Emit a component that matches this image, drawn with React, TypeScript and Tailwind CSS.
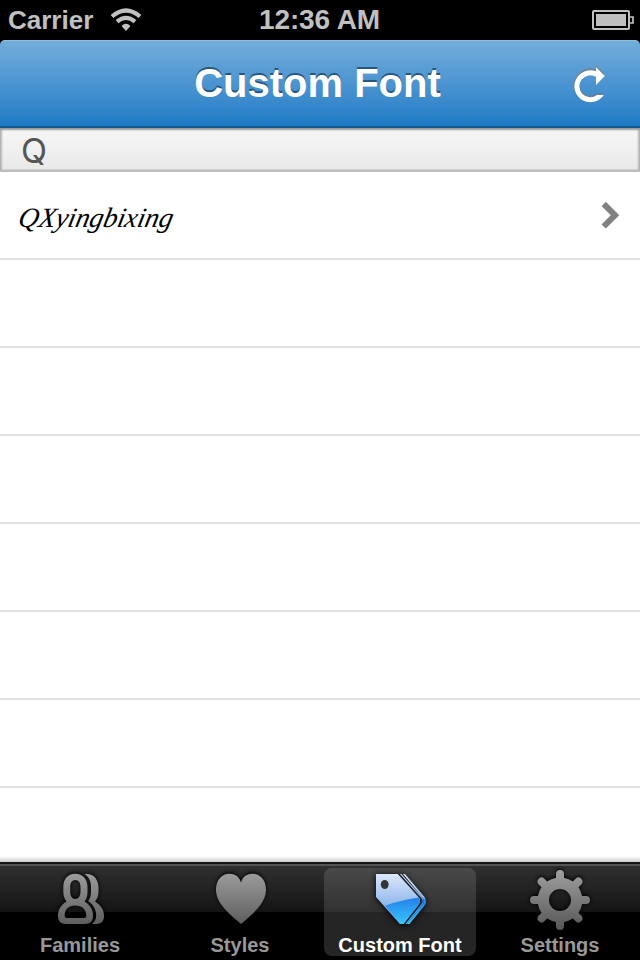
import type { ReactNode } from 'react';

function StatusBar() {
  return (
    <div className="grid h-10 shrink-0 grid-cols-3 items-center bg-black font-bold text-[#c0c0c0]">
      <div className="flex items-center pl-2">
        <span className="text-[26px] leading-10">Carrier</span>
        <svg className="ml-[17px] h-6 w-8" viewBox="110 8 32 24" fill="none" stroke="#c0c0c0" strokeWidth="4.2">
          <path d="M112 16.500Q126 4.500 140 16.500" />
          <path d="M117 21.700Q126 14 135 21.700" />
          <path d="M121.500 26Q126 21.500 130.500 26L126 31Z" fill="#c0c0c0" stroke="none" />
        </svg>
      </div>
      <span className="pr-px text-center text-[28px] leading-10 whitespace-nowrap -tracking-[0.1px]">12:36 AM</span>
      <svg className="mr-[6px] h-5 w-[42px] justify-self-end" viewBox="592 9 42 20">
        <rect x="593" y="10" width="36" height="18" rx="1" fill="none" stroke="#c0c0c0" strokeWidth="2" />
        <rect x="596" y="13" width="30" height="12" fill="#c0c0c0" />
        <path d="M630 16h3v6h-3" fill="none" stroke="#c0c0c0" strokeWidth="1.7" />
      </svg>
    </div>
  );
}

function NavBar() {
  return (
    <div className="shrink-0 bg-black">
      <header className="grid h-[88px] grid-cols-[110px_1fr_110px] items-center rounded-t-[5px] border-t border-b-2 border-t-[#92c1df] border-b-[#155b91] bg-linear-to-b from-[#72addb] to-[#1b7bc5]">
        <span />
        <h1 className="pr-[5px] text-center text-[40px] leading-[83px] font-bold whitespace-nowrap text-white [text-shadow:0_-2px_0_#28577d]">
          Custom Font
        </h1>
        <svg className="ml-[38px] h-[42px] w-[42px]" viewBox="568 63 42 42">
          <path id="reload" d="M596 65.500 604.800 74.500 596 83.500V75.200A11 11 0 1 0 597 93.500H604A16.200 16.200 0 1 1 596 69.700Z" fill="#6f7f8d" />
          <path d="M596 67 604.800 76 596 85V76.800A11 11 0 1 0 597 95H603.800A16 16 0 1 1 596 71.200Z" fill="white" />
        </svg>
      </header>
    </div>
  );
}

function TableRow({ children }: { children?: ReactNode }) {
  return (
    <div className="flex h-[88px] shrink-0 items-center justify-between border-b-2 border-[#e0e0e0] pr-5 pl-[19px]">
      {children}
    </div>
  );
}

function Gradients() {
  return (
    <defs>
      <linearGradient id="metal" x1="0" y1="870" x2="0" y2="930" gradientUnits="userSpaceOnUse">
        <stop stopColor="#a0a0a0" />
        <stop offset="1" stopColor="#565656" />
      </linearGradient>
      <linearGradient id="pale" x1="0" y1="874" x2="0" y2="908" gradientUnits="userSpaceOnUse">
        <stop stopColor="#dce7fa" />
        <stop offset="1" stopColor="#89b3eb" />
      </linearGradient>
      <linearGradient id="vivid" x1="0" y1="897" x2="0" y2="924" gradientUnits="userSpaceOnUse">
        <stop stopColor="#247fe9" />
        <stop offset="1" stopColor="#39c5ff" />
      </linearGradient>
      <linearGradient id="rear" x1="0" y1="874" x2="0" y2="924" gradientUnits="userSpaceOnUse">
        <stop stopColor="#dce7fa" />
        <stop offset=".46" stopColor="#9abfef" />
        <stop offset=".52" stopColor="#2888ed" />
        <stop offset="1" stopColor="#39c5ff" />
      </linearGradient>
    </defs>
  );
}

function FamiliesIcon() {
  return (
    <svg className="h-[66px] w-full" viewBox="0 866 160 66">
      <Gradients />
      <g fill="url(#metal)" className="drop-shadow-[0_-1px_2px_#000]">
        <path
          fillRule="evenodd"
          d="M75.300 873.800C67.500 873.800 63.300 879.500 63.300 887V892C63.300 896 64.500 899 66.500 901.500C61 905 58 909.500 58 915.500C58 921 60.500 924 66 924H85C90.500 924 93 921 93 915.500C93 909.500 90 905 84.500 901.500C86.500 899 87.500 896 87.500 892V887C87.500 879.500 83 873.800 75.300 873.800ZM75.300 880C78.800 880 80.500 883 80.500 887V891.500C80.500 896 78.500 899 75.300 899C72 899 70.200 896 70.200 891.500V887C70.200 883 71.900 880 75.300 880ZM75.300 905.500C82 905.500 86.300 909.500 86.300 915.500C86.300 917.300 85.500 918 84 918H67C65.500 918 64.700 917.300 64.700 915.500C64.700 909.500 68.500 905.500 75.300 905.500Z"
        />
        <path d="M84.500 874C94 873 98.500 879.500 98.500 888V892C98.500 896 97 899 95 901.500C101 905.500 104 910 104 916C104 921.500 101 924 96 924H92Q96.200 920.500 96.200 915.500C96.200 909 93 904.500 88.200 901C90.500 898 91 895 91 891.500V886.500C91 881 88.500 876.500 84.500 874Z" />
      </g>
    </svg>
  );
}

function HeartIcon() {
  return (
    <svg className="h-[66px] w-full" viewBox="160 866 160 66">
      <path d="M241 882.500c-2-6-6-8.700-11.500-8.700-7.500 0-13.500 6-13.500 16 0 14 14 24.500 25 34.200 11-9.700 25-20.200 25-34.200 0-10-6-16-13.500-16-5.500 0-9.500 2.700-11.500 8.700Z" fill="url(#metal)" className="drop-shadow-[0_-1px_2px_#000]" />
    </svg>
  );
}

function TagsIcon() {
  return (
    <svg className="h-[64px] w-full shrink-0" viewBox="324 868 152 64">
      <g className="drop-shadow-[0_1px_3px_#000]">
        <path d="M376 874H398L419 897.500Q421.500 901 418.500 905L403.500 924H400L376 897Z" fill="url(#pale)" />
        <path d="M385 905.500Q392 903 401 901 412 898 419 897.500 421 901 418.500 905L403.500 924H400Z" fill="url(#vivid)" />
        <path d="M397.800 874H399.800L421.500 898Q423.500 901.500 421 904.500L405.500 924H404L419.200 905Q422 901 419.500 897.500Z" fill="#242b34" />
        <path d="M400 874H401.300L422.500 897.500Q425 901.500 422.500 905L407 924H405.500L421 904.500Q423.500 901.500 421.500 898Z" fill="url(#rear)" />
        <path d="M403 874H405L424.500 897Q427.500 901.500 424.500 905.500L409.500 924H407L422.500 905Q425 901.500 422.500 897.500Z" fill="url(#rear)" />
      </g>
      <ellipse cx="384.700" cy="884.500" rx="3.900" ry="4.500" fill="#343434" />
    </svg>
  );
}

function GearIcon() {
  return (
    <svg className="h-[66px] w-full" viewBox="480 866 160 66">
      <g className="drop-shadow-[0_-1px_2px_#000]" stroke="url(#metal)" fill="none">
        <circle cx="560" cy="900" r="16.700" strokeWidth="11.400" />
        <path d="M560.010 874V881M560 919V926M534 900.010H541M579 900H586M541.600 881.600 547 887M573 913 578.400 918.400M541.600 918.400 547 913M573 887 578.400 881.600" strokeWidth="8" strokeLinecap="round" />
      </g>
    </svg>
  );
}

function Tab({ label, children }: { label: string; children: ReactNode }) {
  return (
    <div className="flex min-w-0 flex-1 flex-col text-center text-[#989898]">
      {children}
      <span className="text-[20px] leading-[26px] font-bold">{label}</span>
    </div>
  );
}

export default function App() {
  return (
    <div className="flex h-[960px] w-[640px] flex-col overflow-hidden bg-white font-['Liberation_Sans',Arial,sans-serif]">
      <StatusBar />
      <NavBar />
      <div className="flex h-11 shrink-0 items-center border-b-2 border-[#bdbdbd] bg-linear-to-b from-[#f7f7f7] to-[#e9e9e9] pl-[21px] font-['Inter',sans-serif] text-[34px] leading-none text-[#555] shadow-[inset_0_2px_2px_#999,inset_2px_0_2px_#bbb,inset_-2px_0_2px_#bbb]">
        <span className="pt-1">Q</span>
      </div>
      <main className="flex min-h-0 flex-1 flex-col overflow-hidden">
        <TableRow>
          <span className="pt-[5px] font-['Liberation_Serif',serif] text-[28px] text-black italic">
            <span className="inline-block origin-left -skew-x-12 whitespace-nowrap tracking-[-0.1px]">QXyingbixing</span>
          </span>
          <svg className="h-[30px] w-5" viewBox="600 200 20 30">
            <path d="M603.700 204 615 215.200 603.700 226.500" fill="none" stroke="#808080" strokeWidth="6" />
          </svg>
        </TableRow>
        <TableRow />
        <TableRow />
        <TableRow />
        <TableRow />
        <TableRow />
        <TableRow />
        <TableRow />
      </main>
      <div className="-mt-1.5 h-1.5 shrink-0 bg-linear-to-b from-transparent to-black/20" />
      <footer className="flex h-[98px] shrink-0 border-t-2 border-[#151515] bg-[linear-gradient(#535353_0_2px,#303030_2px,#141414_48px,#000_48px)] pt-[2px]">
        <Tab label="Families"><FamiliesIcon /></Tab>
        <Tab label="Styles"><HeartIcon /></Tab>
        <div className="mx-1 mt-[2px] flex h-[88px] w-[152px] shrink-0 flex-col rounded-lg bg-[linear-gradient(#494949,#313131_44px,#252525_44px)] text-center text-white">
          <TagsIcon />
          <span className="text-[20px] leading-[26px] font-bold whitespace-nowrap">Custom Font</span>
        </div>
        <Tab label="Settings"><GearIcon /></Tab>
      </footer>
    </div>
  );
}
